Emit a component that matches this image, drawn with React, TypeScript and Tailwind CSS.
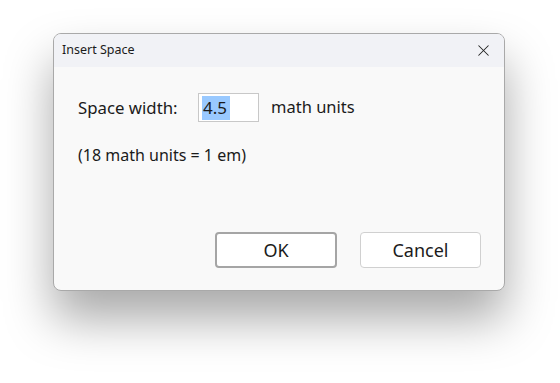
import { X } from 'lucide-react';

export default function App() {
  return (
    <div
      className="h-[383px] w-[560px] bg-white pl-[53px] pt-[33px]"
      style={{ fontFamily: '"Noto Sans", "Open Sans", sans-serif' }}
    >
      <div className="flex h-[258px] w-[452px] flex-col overflow-hidden rounded-[8px] border border-[#a9a9a9] bg-[#f9f9f9] shadow-[0_28px_48px_rgba(0,0,0,0.34)]">
        <div className="flex h-[33px] shrink-0 items-center justify-between bg-[#f1f2f6] pl-[8px] pr-[11px]">
          <span className="text-[12.5px] text-[#1b1b1b]">Insert Space</span>
          <X size={19} strokeWidth={1.3} className="text-[#222]" />
        </div>
        <div className="flex flex-1 flex-col pl-[24px] pr-[23px]">
          <div className="mt-[26px] flex items-center">
            <span className="w-[120px] text-[16.8px] text-[#1b1b1b]">Space width:</span>
            <div className="flex h-[29px] w-[61px] items-center border border-[#c8c8c8] bg-white px-[3px]">
              <span className="bg-[#99c9ff] pl-[1px] pr-[3px] text-[17px] leading-[24px] text-[#1b1b1b]">4.5</span>
            </div>
            <span className="ml-[12px] text-[16.5px] text-[#1b1b1b]">math units</span>
          </div>
          <p className="mt-[21px] text-[16px] text-[#1b1b1b]">(18 math units = 1 em)</p>
          <div className="mt-auto mb-[22px] flex justify-end gap-[23px]">
            <button className="flex h-[36px] w-[122px] items-center justify-center rounded-[4px] border-2 border-[#a5a5a5] bg-white text-[18px] text-[#1b1b1b]">
              OK
            </button>
            <button className="flex h-[36px] w-[121px] items-center justify-center rounded-[4px] border border-[#d0d0d0] bg-white text-[18px] text-[#1b1b1b]">
              Cancel
            </button>
          </div>
        </div>
      </div>
    </div>
  );
}
